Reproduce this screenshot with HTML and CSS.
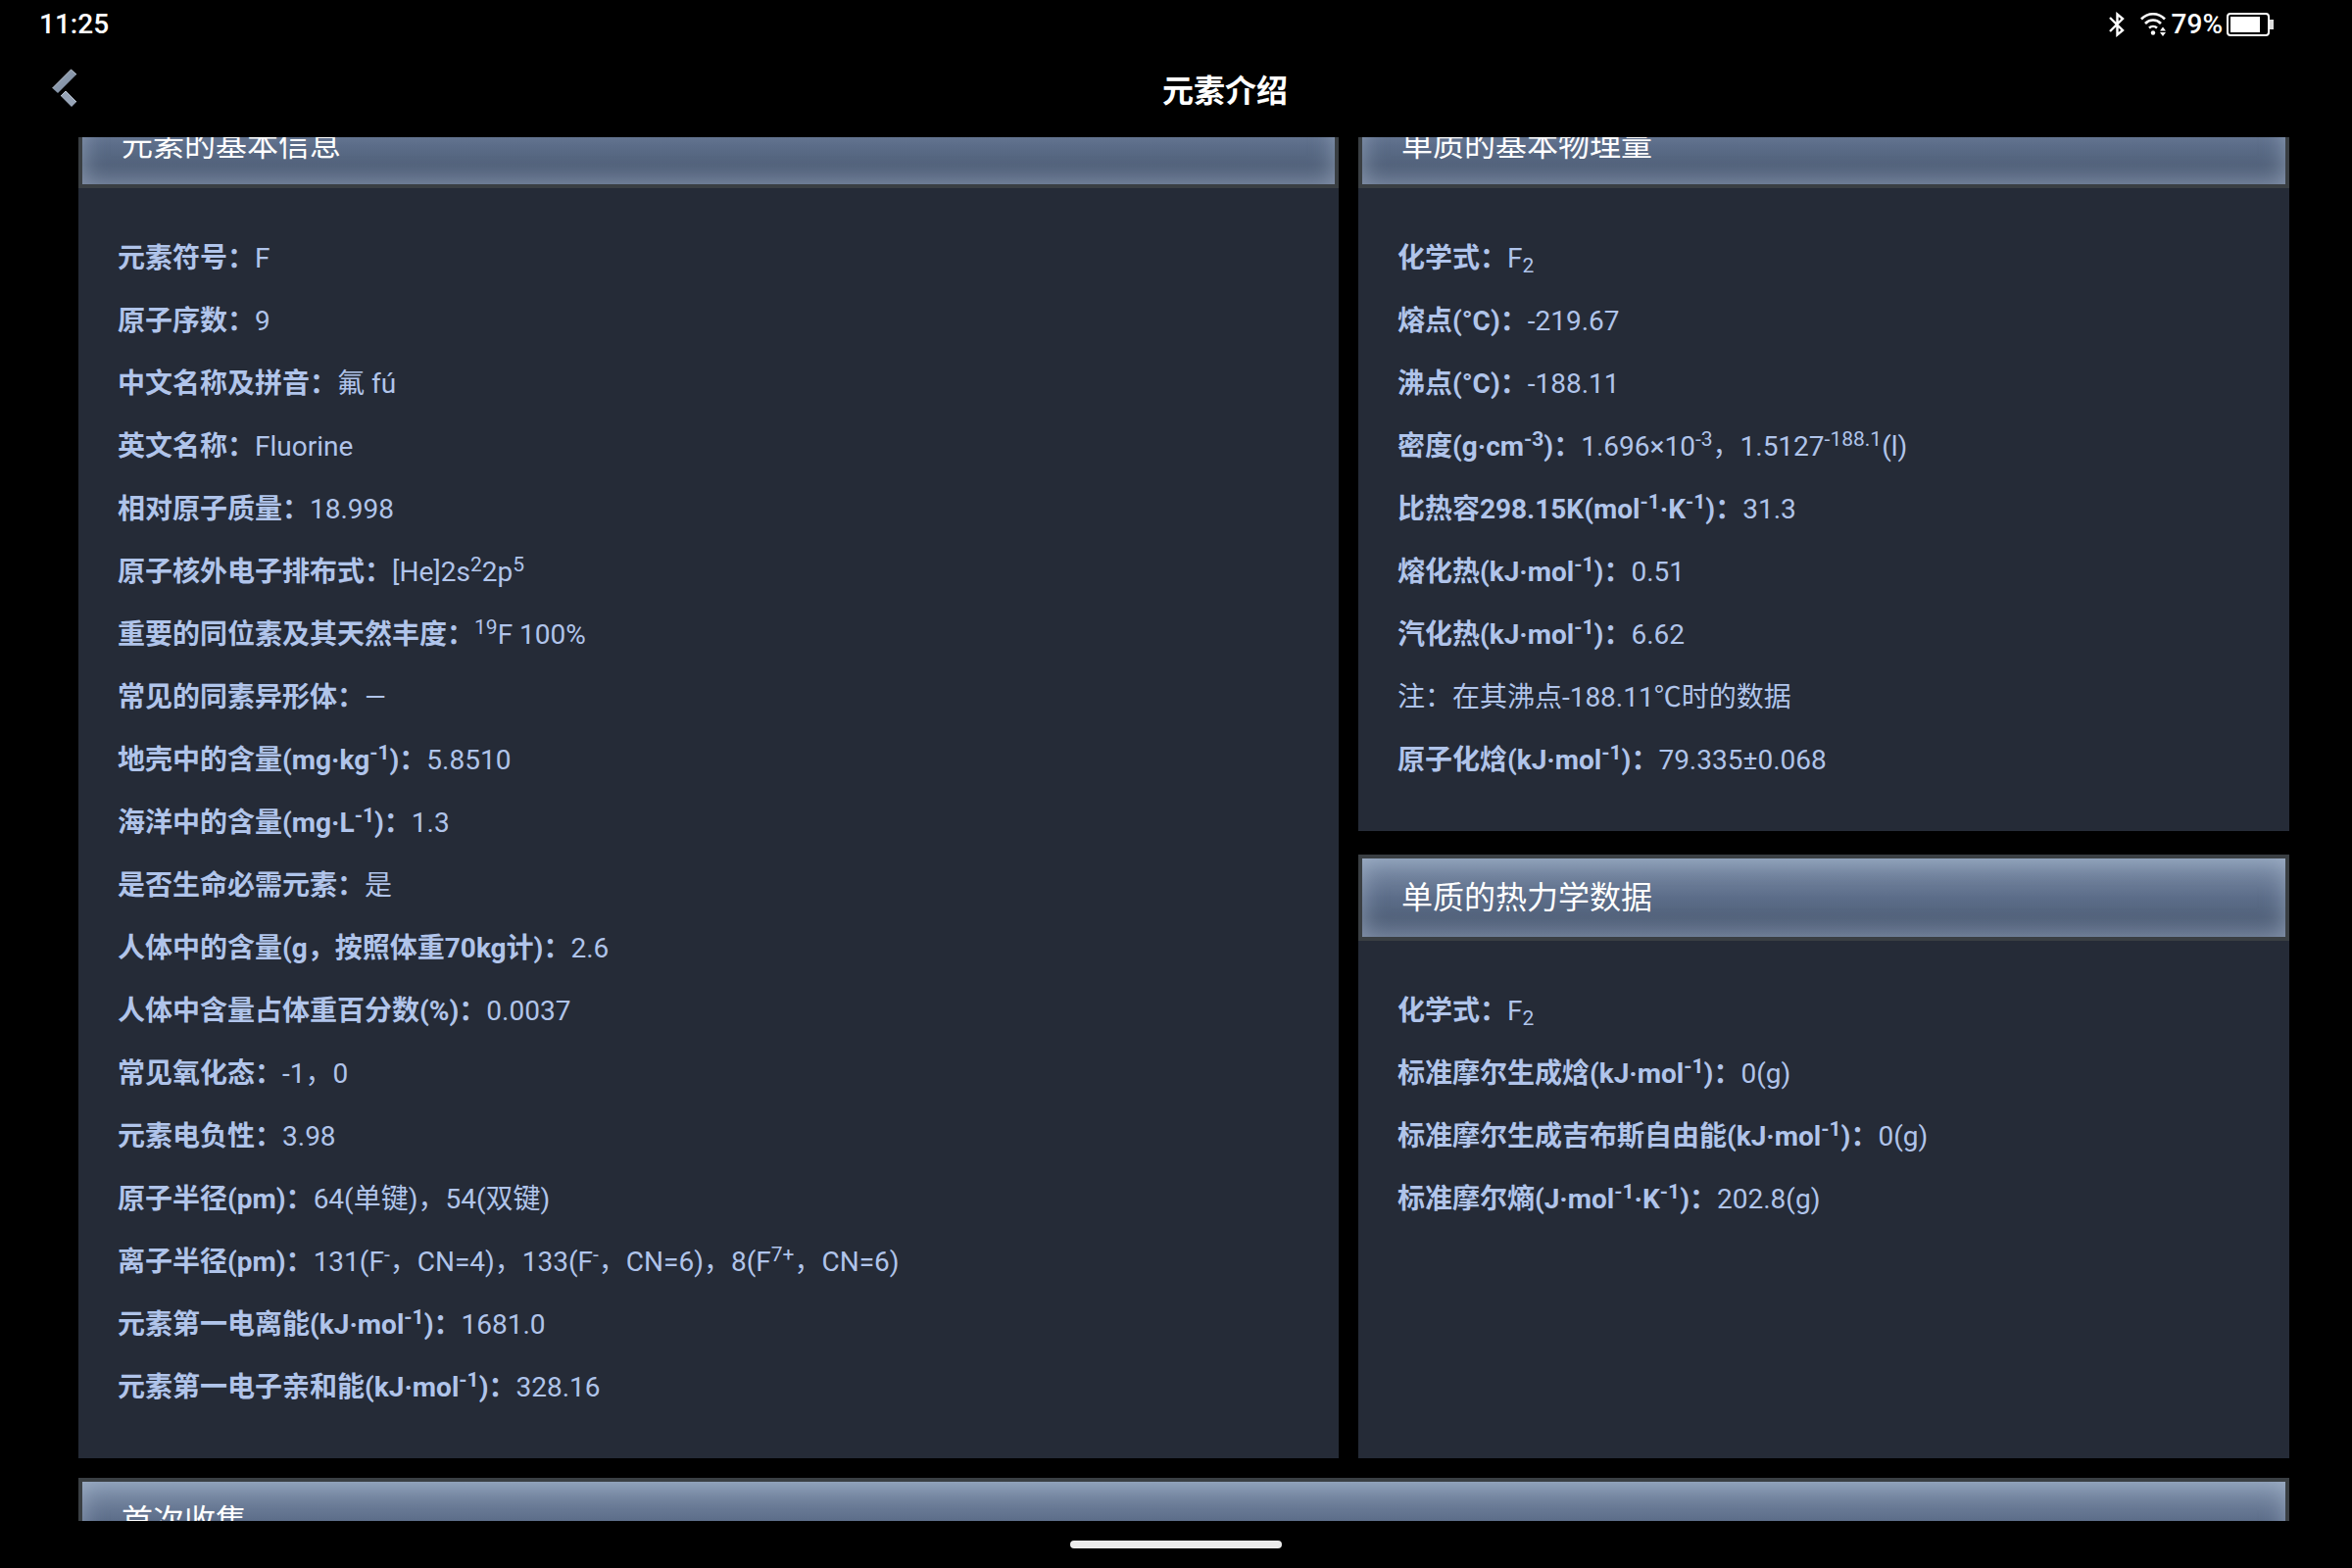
FILE: index.html
```html
<!DOCTYPE html>
<html lang="zh-CN">
<head>
    <meta charset="UTF-8">
    <meta name="viewport" content="width=device-width, initial-scale=1.0">
    <title>元素介绍</title>
    <link rel="stylesheet" href="styles.css">
</head>
<body>

    <div class="status-bar">
        <span class="time">11:25</span>
        <div class="status-icons">
            <svg class="icon-bluetooth" viewBox="0 0 16 26" width="16" height="26" fill="none" stroke="#fff" stroke-width="2.4">
                <path d="M1 6 L14 19 L8.500 23.500 V2.500 L14 7 L1 20"/>
            </svg>
            <svg class="icon-wifi" viewBox="0 0 26 24" width="26" height="24" fill="none" stroke="#fff" stroke-width="2.6">
                <path d="M1 6.5 A16.5 16.5 0 0 1 25 6.5"/>
                <path d="M5 11 A11 11 0 0 1 21 11"/>
                <path d="M9 15.5 A6 6 0 0 1 17 15.5"/>
                <circle cx="13" cy="20.5" r="2.2" fill="#fff" stroke="none"/>
                <path d="M20 18.5 L23 14.5 L26 18.5 Z M20 20 L23 24 L26 20 Z" fill="#fff" stroke="none"/>
            </svg>
            <span class="percent">79%</span>
            <svg class="icon-battery" viewBox="0 0 48 24" width="48" height="24">
                <rect x="1" y="1" width="42" height="22" rx="3" fill="none" stroke="#fff" stroke-width="2"/>
                <rect x="4" y="4" width="30" height="16" fill="#fff"/>
                <rect x="44" y="7" width="4" height="10" fill="#ddd"/>
            </svg>
        </div>
    </div>

    <div class="app-bar">
        <button class="back-btn" type="button" aria-label="返回">
            <svg viewBox="0 0 26 40" width="26" height="40">
                <defs>
                    <linearGradient id="steel" x1="0" y1="0" x2="1" y2="1">
                        <stop offset="0" stop-color="#9aa8ba"/>
                        <stop offset="1" stop-color="#77869b"/>
                    </linearGradient>
                </defs>
                <path d="M0.5 20 L19.5 1 L25 6 L6 25 Z" fill="url(#steel)"/>
                <path d="M9 28 L14 23 L25 34 L20 39 Z" fill="#97a4b7"/>
                <path d="M0.5 20 L19.5 1 L25 6 M9 28 L14 23 L25 34" fill="none" stroke="#bcc6d2" stroke-width="1"/>
            </svg>
        </button>
        <h1 class="app-title">元素介绍</h1>
    </div>

    <div class="viewport">
        <div class="content">
            <div class="columns">
                <section class="panel">
                    <h2 class="panel-title">元素的基本信息</h2>
                    <div class="panel-body">
                        <p><b>元素符号：</b>F</p>
                        <p><b>原子序数：</b>9</p>
                        <p><b>中文名称及拼音：</b>氟 fú</p>
                        <p><b>英文名称：</b>Fluorine</p>
                        <p><b>相对原子质量：</b>18.998</p>
                        <p><b>原子核外电子排布式：</b>[He]2s<sup>2</sup>2p<sup>5</sup></p>
                        <p><b>重要的同位素及其天然丰度：</b><sup>19</sup>F 100%</p>
                        <p><b>常见的同素异形体：</b>—</p>
                        <p><b>地壳中的含量(mg·kg<sup>-1</sup>)：</b>5.8510</p>
                        <p><b>海洋中的含量(mg·L<sup>-1</sup>)：</b>1.3</p>
                        <p><b>是否生命必需元素：</b>是</p>
                        <p><b>人体中的含量(g，按照体重70kg计)：</b>2.6</p>
                        <p><b>人体中含量占体重百分数(%)：</b>0.0037</p>
                        <p><b>常见氧化态：</b>-1，0</p>
                        <p><b>元素电负性：</b>3.98</p>
                        <p><b>原子半径(pm)：</b>64(单键)，54(双键)</p>
                        <p><b>离子半径(pm)：</b>131(F<sup>-</sup>，CN=4)，133(F<sup>-</sup>，CN=6)，8(F<sup>7+</sup>，CN=6)</p>
                        <p><b>元素第一电离能(kJ·mol<sup>-1</sup>)：</b>1681.0</p>
                        <p><b>元素第一电子亲和能(kJ·mol<sup>-1</sup>)：</b>328.16</p>
                    </div>
                </section>

                <div class="side">
                    <section class="panel">
                        <h2 class="panel-title">单质的基本物理量</h2>
                        <div class="panel-body">
                            <p><b>化学式：</b>F<sub>2</sub></p>
                            <p><b>熔点(°C)：</b>-219.67</p>
                            <p><b>沸点(°C)：</b>-188.11</p>
                            <p><b>密度(g·cm<sup>-3</sup>)：</b>1.696×10<sup>-3</sup>，1.5127<sup>-188.1</sup>(l)</p>
                            <p><b>比热容298.15K(mol<sup>-1</sup>·K<sup>-1</sup>)：</b>31.3</p>
                            <p><b>熔化热(kJ·mol<sup>-1</sup>)：</b>0.51</p>
                            <p><b>汽化热(kJ·mol<sup>-1</sup>)：</b>6.62</p>
                            <p>注：在其沸点-188.11℃时的数据</p>
                            <p><b>原子化焓(kJ·mol<sup>-1</sup>)：</b>79.335±0.068</p>
                        </div>
                    </section>
                    <section class="panel grow">
                        <h2 class="panel-title">单质的热力学数据</h2>
                        <div class="panel-body">
                            <p><b>化学式：</b>F<sub>2</sub></p>
                            <p><b>标准摩尔生成焓(kJ·mol<sup>-1</sup>)：</b>0(g)</p>
                            <p><b>标准摩尔生成吉布斯自由能(kJ·mol<sup>-1</sup>)：</b>0(g)</p>
                            <p><b>标准摩尔熵(J·mol<sup>-1</sup>·K<sup>-1</sup>)：</b>202.8(g)</p>
                        </div>
                    </section>
                </div>
            </div>

            <section class="panel">
                <h2 class="panel-title">首次收集</h2>
            </section>
        </div>
    </div>

    <div class="nav-bar"><div class="nav-handle"></div></div>

</body>
</html>
```
FILE: styles.css
```css
* { margin: 0; padding: 0; box-sizing: border-box; }
body {
    background: #000; color: #fff; height: 100vh; overflow: hidden;
    display: flex; flex-direction: column;
    font-family: Roboto, "Noto Sans CJK SC", sans-serif; font-size: 28px;
}

.status-bar {
    height: 50px; padding: 0 80px 0 40px; font-weight: 500; line-height: 50px;
    display: flex; align-items: center; justify-content: space-between;
}
.status-icons { display: flex; align-items: center; }
.icon-wifi { margin-left: 16px; }
.percent { margin: 0 4px 0 6px; }

.app-bar { height: 80px; margin-bottom: 10px; display: flex; align-items: center; }
.back-btn {
    width: 100px; height: 80px; padding-left: 53px; background: none; border: none;
    display: flex; align-items: center; cursor: pointer;
}
.app-title { flex: 1; text-align: center; font-size: 32px; font-weight: bold; }

/* scrolled area, first headers are partly under the app bar */
.viewport { flex: 1; min-height: 0; overflow: hidden; padding: 0 64px 0 80px; }
.content { margin-top: -36px; display: flex; flex-direction: column; gap: 20px; }
.columns { display: grid; grid-template-columns: 57% 1fr; column-gap: 20px; }
.side { display: flex; flex-direction: column; gap: 24px; }
.panel { background: #252b37; }
.grow { flex: 1; }
.panel-title {
    height: 88px; padding: 0 40px; border: 4px solid #3a3f43;
    font-size: 32px; font-weight: normal; line-height: 80px;
    background: linear-gradient(#8295af 0%, #6f809b 25%, #5c6d89 50%, #52627b 75%, #56657f 100%);
    box-shadow: inset 0 0 24px rgba(190, 204, 224, 0.5);
}
.panel-body { padding: 40px; color: #b0c4ea; line-height: 64px; }
.panel-body b { font-weight: bold; }
sup, sub { font-size: 21px; line-height: 0; }
sub { vertical-align: -5px; }

.nav-bar { height: 48px; display: flex; align-items: center; justify-content: center; }
.nav-handle { width: 216px; height: 8px; border-radius: 4px; background: #ebebeb; }
```
